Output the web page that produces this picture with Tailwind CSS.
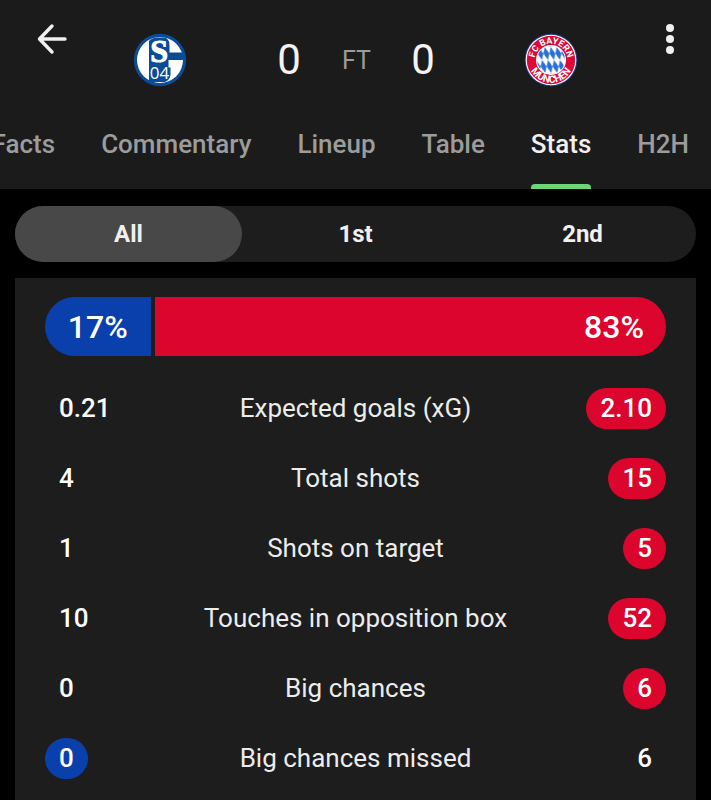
<!DOCTYPE html>
<html lang="en">
<head>
    <meta charset="UTF-8">
    <meta name="viewport" content="width=device-width, initial-scale=1.0">
    <title>Schalke 04 - Bayern München | Stats</title>
    <script src="https://cdn.jsdelivr.net/npm/@tailwindcss/browser@4"></script>
</head>
<body class="bg-black text-white font-[Roboto,sans-serif]">
    <div class="flex min-h-screen flex-col">

        <!-- Match header -->
        <header class="bg-[#1b1b1b]">
            <div class="flex items-start justify-between px-6 pt-5">
                <button type="button" aria-label="Back" class="flex h-[38px] w-14 items-center justify-center">
                    <svg class="h-8 w-8" viewBox="0 0 32 32" fill="none" stroke="#f1eff0" stroke-width="3.4" stroke-linecap="round" stroke-linejoin="round">
                        <path d="M29 16H4M16 3L3.500 16L16 29"/>
                    </svg>
                </button>

                <div class="flex h-20 items-center gap-[41px]">
                    <!-- Schalke 04 -->
                    <svg class="mr-[49px] h-[54px] w-[54px]" viewBox="0 0 54 54" role="img" aria-label="Schalke 04">
                        <circle cx="27" cy="27" r="26.200" fill="#0b4c96"/>
                        <circle cx="27" cy="27" r="23" fill="#fff"/>
                        <path d="M16 8Q18 5 24 4.500H31Q36.500 5.500 36.500 12V19.500H52V27H35.500V34.500H37.500V42Q37 47 32 49H16Z" fill="#0b4c96"/>
                        <text x="26.200" y="28.800" text-anchor="middle" font-family="Liberation Serif, serif" font-weight="700" font-size="32" fill="#fff" stroke="#fff" stroke-width="1">S</text>
                        <text x="26.500" y="46" text-anchor="middle" font-family="Liberation Sans Narrow, Open Sans, sans-serif" font-size="17" fill="#fff">04</text>
                    </svg>
                    <span class="w-6 text-center text-[42px] leading-none text-[#f4f2f3]">0</span>
                    <span class="w-7 text-center text-[25px] leading-none text-[#9c9c9c]">FT</span>
                    <span class="w-6 text-center text-[42px] leading-none text-[#f4f2f3]">0</span>
                    <!-- Bayern München -->
                    <svg class="ml-12 h-[54px] w-[54px]" viewBox="0 0 54 54" role="img" aria-label="FC Bayern München">
                        <defs>
                            <pattern id="lozenges" width="6" height="13" patternUnits="userSpaceOnUse" patternTransform="translate(27 27) skewX(14)">
                                <rect width="6" height="13" fill="#fff"/>
                                <path d="M3 0L6 6.500L3 13L0 6.500Z" fill="#2a6fd6"/>
                            </pattern>
                            <path id="topArc" d="M10.600 27A16.400 16.400 0 0 1 43.400 27L43.400 40"/>
                            <path id="bottomArc" d="M4.200 27A22.800 22.800 0 0 0 49.800 27"/>
                        </defs>
                        <circle cx="27" cy="27" r="26.300" fill="#1c4596"/>
                        <circle cx="27" cy="27" r="25.300" fill="#fff"/>
                        <circle cx="27" cy="27" r="24.200" fill="#dc0b35"/>
                        <circle cx="27" cy="27" r="15" fill="#fff"/>
                        <circle cx="27" cy="27" r="14" fill="url(#lozenges)"/>
                        <g fill="#fff" font-family="Roboto, sans-serif" font-weight="700" text-anchor="middle">
                            <text font-size="9"><textPath href="#topArc" startOffset="25.800">FC BAYERN</textPath></text>
                            <text font-size="10"><textPath href="#bottomArc" startOffset="50%">MÜNCHEN</textPath></text>
                        </g>
                    </svg>
                </div>

                <button type="button" aria-label="More options" class="flex h-[38px] w-14 items-center justify-end pr-3">
                    <svg class="h-8 w-[10px]" viewBox="0 0 10 32" fill="#f1eff0">
                        <circle cx="5" cy="5" r="4"/>
                        <circle cx="5" cy="16" r="4"/>
                        <circle cx="5" cy="27" r="4"/>
                    </svg>
                </button>
            </div>

            <!-- Tabs, scrolled to the end -->
            <nav class="flex h-[89px] justify-end gap-[46px] overflow-hidden pr-[22px] text-[26px] leading-[88px] font-medium whitespace-nowrap text-[#9c9c9c]">
                <a href="#facts">Facts</a>
                <a href="#commentary">Commentary</a>
                <a href="#lineup">Lineup</a>
                <a href="#table">Table</a>
                <a href="#stats" aria-current="page" class="flex flex-col justify-between text-[#f1eff0]">
                    <span class="h-[84px]">Stats</span>
                    <span class="h-[5px] rounded-t bg-[#6cd677]"></span>
                </a>
                <a href="#h2h">H2H</a>
            </nav>
        </header>

        <main class="flex flex-1 flex-col gap-4 px-[15px] pt-[17px]">
            <!-- Period filter -->
            <div class="grid h-14 grid-cols-3 rounded-full bg-[#1d1d1d] text-2xl font-bold text-[#f1eff0]">
                <button type="button" aria-pressed="true" class="rounded-full bg-[#484848]">All</button>
                <button type="button" aria-pressed="false" class="rounded-full">1st</button>
                <button type="button" aria-pressed="false" class="rounded-full">2nd</button>
            </div>

            <section class="flex-1 bg-[#1d1d1d] px-[30px] pt-[19px]">
                <!-- Ball possession -->
                <div class="mb-[17px] flex h-[59px] gap-1 overflow-hidden rounded-full text-[32px] font-medium">
                    <div class="flex items-center justify-center bg-[#0a40ac]" style="width: 17%">17%</div>
                    <div class="flex flex-1 items-center justify-end bg-[#dc052d] pr-[22px]">83%</div>
                </div>

                <table class="w-full table-fixed text-[26px] leading-[41px]">
                    <tbody>
                        <tr class="h-[70px]">
                            <td class="w-[100px] font-medium"><span class="inline-block px-[14px]">0.21</span></td>
                            <th scope="row" class="font-normal text-[#ececec]">Expected goals (xG)</th>
                            <td class="w-[100px] text-right font-medium"><span class="inline-block rounded-full bg-[#dc052d] px-[14px]">2.10</span></td>
                        </tr>
                        <tr class="h-[70px]">
                            <td class="font-medium"><span class="inline-block px-[14px]">4</span></td>
                            <th scope="row" class="font-normal text-[#ececec]">Total shots</th>
                            <td class="text-right font-medium"><span class="inline-block rounded-full bg-[#dc052d] px-[14px]">15</span></td>
                        </tr>
                        <tr class="h-[70px]">
                            <td class="font-medium"><span class="inline-block px-[14px]">1</span></td>
                            <th scope="row" class="font-normal text-[#ececec]">Shots on target</th>
                            <td class="text-right font-medium"><span class="inline-block rounded-full bg-[#dc052d] px-[14px]">5</span></td>
                        </tr>
                        <tr class="h-[70px]">
                            <td class="font-medium"><span class="inline-block px-[14px]">10</span></td>
                            <th scope="row" class="font-normal text-[#ececec]">Touches in opposition box</th>
                            <td class="text-right font-medium"><span class="inline-block rounded-full bg-[#dc052d] px-[14px]">52</span></td>
                        </tr>
                        <tr class="h-[70px]">
                            <td class="font-medium"><span class="inline-block px-[14px]">0</span></td>
                            <th scope="row" class="font-normal text-[#ececec]">Big chances</th>
                            <td class="text-right font-medium"><span class="inline-block rounded-full bg-[#dc052d] px-[14px]">6</span></td>
                        </tr>
                        <tr class="h-[70px]">
                            <td class="font-medium"><span class="inline-block rounded-full bg-[#0a40ac] px-[14px]">0</span></td>
                            <th scope="row" class="font-normal text-[#ececec]">Big chances missed</th>
                            <td class="text-right font-medium"><span class="inline-block px-[14px]">6</span></td>
                        </tr>
                    </tbody>
                </table>
            </section>
        </main>
    </div>
</body>
</html>
